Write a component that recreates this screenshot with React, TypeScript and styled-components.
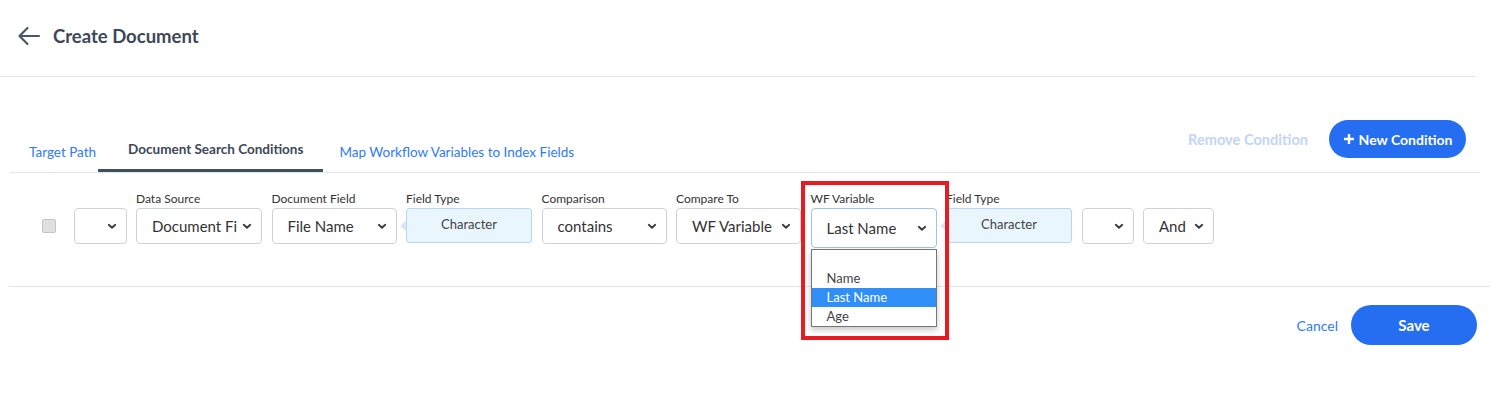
import React from "react";
import styled, { createGlobalStyle, css } from "styled-components";

const GlobalStyle = createGlobalStyle`
  body {
    margin: 0;
    background: #ffffff;
    font-family: "Lato", "Open Sans", sans-serif;
    color: #333333;
  }
`;

const Page = styled.div`
  width: 1505px;
  height: 405px;
  overflow: hidden;
`;

// Header
const Header = styled.header`
  display: flex;
  align-items: center;
  gap: 12px;
  height: 72px;
  padding: 0 0 4px 17px;
  margin-right: 30px;
  border-bottom: 1px solid #e4e6ea;
`;

const BackButton = styled.button`
  background: none;
  border: none;
  padding: 0;
  display: flex;
  align-items: center;
  color: #4a5568;
  cursor: pointer;
`;

const Title = styled.h1`
  margin: 0;
  font-size: 18.5px;
  font-weight: 700;
  color: #3c4858;
`;

// Tabs
const TabBar = styled.div`
  display: flex;
  align-items: flex-end;
  margin: 43px 25px 0 10px;
  border-bottom: 1px solid #e4e6ea;
`;

const Tab = styled.div<{ $active?: boolean; $pl: number; $pr: number }>`
  padding: 0 ${(p) => p.$pr}px 0 ${(p) => p.$pl}px;
  line-height: 18px;
  font-size: 13.5px;
  cursor: pointer;
  white-space: nowrap;
  ${(p) =>
    p.$active
      ? css`
          padding-bottom: 11px;
          border-bottom: 3px solid #3f4f62;
          color: #3c4858;
          font-weight: 700;
        `
      : css`
          padding-bottom: 8px;
          margin-bottom: 3px;
          color: #2f7bf5;
        `}
`;

const TabActions = styled.div`
  margin: 0 14px 14px auto;
  display: flex;
  align-items: center;
  gap: 21px;
`;

const TextButton = styled.button<{ $muted?: boolean; $weight?: number; $size?: number }>`
  background: none;
  border: none;
  padding: 0;
  font-family: inherit;
  font-size: ${(p) => p.$size ?? 14}px;
  font-weight: ${(p) => p.$weight ?? 400};
  color: ${(p) => (p.$muted ? "#c3d5f6" : "#2f7bf5")};
  cursor: pointer;
`;

const PillButton = styled.button<{ $w: number; $h: number; $size?: number }>`
  display: flex;
  align-items: center;
  justify-content: center;
  gap: 4px;
  width: ${(p) => p.$w}px;
  height: ${(p) => p.$h}px;
  border: none;
  border-radius: ${(p) => p.$h / 2}px;
  background: #256df1;
  color: #ffffff;
  font-family: inherit;
  font-size: ${(p) => p.$size ?? 14}px;
  font-weight: 700;
  cursor: pointer;
`;

// Condition row
const ConditionRow = styled.div`
  display: flex;
  align-items: flex-end;
  gap: 9.5px;
  height: 53px;
  padding: 18px 0 42px 33px;
  margin: 0 15px 0 9px;
  border-bottom: 1px solid #e1e5ee;
`;

const CheckCell = styled.div`
  height: 36px;
  display: flex;
  align-items: center;
  margin-right: 8px;
`;

const Checkbox = styled.span`
  width: 12px;
  height: 12px;
  border: 1px solid #c4c4c4;
  border-radius: 2px;
  background: #e0e0e0;
`;

const Field = styled.div<{ $w: number; $drop?: number }>`
  position: relative;
  width: ${(p) => p.$w}px;
  display: flex;
  flex-direction: column;
  margin-bottom: ${(p) => -(p.$drop ?? 0)}px;
`;

const Label = styled.span`
  font-size: 12px;
  line-height: 15px;
  color: #333333;
  margin-bottom: 2px;
  white-space: nowrap;
`;

const SelectBox = styled.div<{ $h?: number; $focus?: boolean }>`
  box-sizing: border-box;
  height: ${(p) => p.$h ?? 36}px;
  display: flex;
  align-items: center;
  justify-content: space-between;
  padding: 0 9px 0 15px;
  border: 1px solid ${(p) => (p.$focus ? "#9cc3f3" : "#cfd3d8")};
  border-radius: 4px;
  background: #ffffff;
  font-size: 15px;
  color: #333333;
  white-space: nowrap;
  overflow: hidden;
`;

const SelectText = styled.span`
  overflow: hidden;
`;

const TypeBox = styled.div`
  position: relative;
  box-sizing: border-box;
  height: 35px;
  margin-bottom: 1px;
  display: flex;
  align-items: center;
  justify-content: center;
  padding-bottom: 3px;
  border: 1px solid #b5d7f1;
  border-radius: 3px;
  background: #eaf6fe;
  font-size: 13px;
  color: #444444;

  &::before {
    content: "";
    position: absolute;
    left: -7px;
    top: 12px;
    border-style: solid;
    border-width: 5px 6px 5px 0;
    border-color: transparent #d7e6f2 transparent transparent;
  }
`;

const DropList = styled.ul`
  position: absolute;
  top: 58px;
  left: 0;
  width: 126px;
  box-sizing: border-box;
  margin: 0;
  padding: 0;
  list-style: none;
  background: #ffffff;
  border: 1px solid #767676;
  box-shadow: 0 3px 6px rgba(0, 0, 0, 0.22);
  z-index: 2;
`;

const DropItem = styled.li<{ $selected?: boolean }>`
  height: 19px;
  line-height: 19px;
  padding-left: 15px;
  font-size: 13px;
  color: ${(p) => (p.$selected ? "#ffffff" : "#444444")};
  background: ${(p) => (p.$selected ? "#2f8ff7" : "transparent")};
`;

const Highlight = styled.div`
  position: absolute;
  left: -10px;
  top: -10px;
  width: 148px;
  height: 159px;
  box-sizing: border-box;
  border: 4px solid #e81b23;
  pointer-events: none;
  z-index: 3;
`;

// Footer
const Footer = styled.div`
  display: flex;
  justify-content: flex-end;
  align-items: center;
  gap: 13px;
  padding-top: 18px;
  margin-right: 28px;
`;

const Chevron = () => (
  <svg width="10" height="7" viewBox="0 0 10 7" fill="none">
    <path d="M1.8 1.8 L5 4.8 L8.2 1.8" stroke="#3a3f47" strokeWidth="1.9" strokeLinecap="round" strokeLinejoin="round" />
  </svg>
);

const Select: React.FC<{ value?: string; h?: number; focus?: boolean }> = ({ value, h, focus }) => (
  <SelectBox $h={h} $focus={focus}>
    <SelectText>{value}</SelectText>
    <Chevron />
  </SelectBox>
);

export default function App() {
  return (
    <Page>
      <GlobalStyle />
      <Header>
        <BackButton>
          <svg width="24" height="20" viewBox="0 0 24 20" fill="none">
            <path d="M22 10 H2.5 M10.5 2 L2.5 10 L10.5 18" stroke="#4a5568" strokeWidth="2.2" strokeLinecap="round" strokeLinejoin="round" />
          </svg>
        </BackButton>
        <Title>Create Document</Title>
      </Header>

      <TabBar>
        <Tab $pl={19} $pr={2}>Target Path</Tab>
        <Tab $active $pl={30} $pr={20}>Document Search Conditions</Tab>
        <Tab $pl={16} $pr={0}>Map Workflow Variables to Index Fields</Tab>
        <TabActions>
          <TextButton $muted $weight={700} $size={14.6}>Remove Condition</TextButton>
          <PillButton $w={137} $h={38}>
            <svg width="12" height="12" viewBox="0 0 12 12">
              <path d="M6 1 V11 M1 6 H11" stroke="#ffffff" strokeWidth="2.4" />
            </svg>
            New Condition
          </PillButton>
        </TabActions>
      </TabBar>

      <ConditionRow>
        <CheckCell>
          <Checkbox />
        </CheckCell>
        <Field $w={53}>
          <Select />
        </Field>
        <Field $w={126}>
          <Label>Data Source</Label>
          <Select value="Document Fi" />
        </Field>
        <Field $w={125}>
          <Label>Document Field</Label>
          <Select value="File Name" />
        </Field>
        <Field $w={126}>
          <Label>Field Type</Label>
          <TypeBox>Character</TypeBox>
        </Field>
        <Field $w={125}>
          <Label>Comparison</Label>
          <Select value="contains" />
        </Field>
        <Field $w={125}>
          <Label>Compare To</Label>
          <Select value="WF Variable" />
        </Field>
        <Field $w={126} $drop={4}>
          <Label>WF Variable</Label>
          <Select value="Last Name" h={40} focus />
          <DropList>
            <DropItem>&nbsp;</DropItem>
            <DropItem>Name</DropItem>
            <DropItem $selected>Last Name</DropItem>
            <DropItem>Age</DropItem>
          </DropList>
          <Highlight />
        </Field>
        <Field $w={126}>
          <Label>Field Type</Label>
          <TypeBox>Character</TypeBox>
        </Field>
        <Field $w={52}>
          <Select />
        </Field>
        <Field $w={71}>
          <Select value="And" />
        </Field>
      </ConditionRow>

      <Footer>
        <TextButton>Cancel</TextButton>
        <PillButton $w={126} $h={40} $size={15}>Save</PillButton>
      </Footer>
    </Page>
  );
}
